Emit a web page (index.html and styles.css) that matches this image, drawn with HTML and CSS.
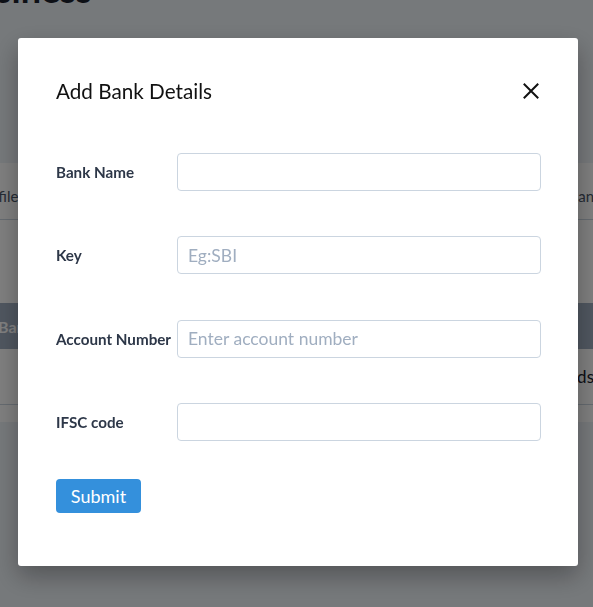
FILE: index.html
```html
<!DOCTYPE html>
<html lang="en">
<head>
<meta charset="utf-8">
<title>Add Bank Details</title>
<link rel="stylesheet" href="styles.css">
</head>
<body>
<div class="page">
  <h1 class="page-title">Business</h1>
  <div class="card">
    <div class="tabs">
      <span class="tab">Profile</span>
      <span class="tab tab-right">Bank Accounts</span>
    </div>
    <div class="table-head">
      <span>Bank Name</span>
    </div>
    <div class="table-row">
      <span class="row-right">Cards</span>
    </div>
    <div class="table-foot"></div>
  </div>
</div>

<div class="overlay">
  <div class="modal" role="dialog" aria-labelledby="modal-title">
    <div class="modal-header">
      <h2 class="modal-title" id="modal-title">Add Bank Details</h2>
      <button class="close" type="button" aria-label="Close">
        <svg width="16" height="16" viewBox="0 0 16 16" aria-hidden="true">
          <path d="M1.5 1.5 L14.5 14.5 M14.5 1.5 L1.5 14.5" stroke="#111" stroke-width="2" fill="none" stroke-linecap="square"/>
        </svg>
      </button>
    </div>
    <form class="form">
      <div class="field">
        <label class="label" for="bank">Bank Name</label>
        <input class="input" id="bank" type="text">
      </div>
      <div class="field">
        <label class="label" for="key">Key</label>
        <input class="input" id="key" type="text" placeholder="Eg:SBI">
      </div>
      <div class="field">
        <label class="label" for="acc">Account Number</label>
        <input class="input" id="acc" type="text" placeholder="Enter account number">
      </div>
      <div class="field">
        <label class="label" for="ifsc">IFSC code</label>
        <input class="input" id="ifsc" type="text">
      </div>
      <div class="actions">
        <button class="submit" type="button">Submit</button>
      </div>
    </form>
  </div>
</div>
</body>
</html>
```

FILE: styles.css
```css
* { box-sizing: border-box; }

html, body {
  margin: 0;
  padding: 0;
  height: 100%;
  overflow: hidden;
}

body {
  background: #edf2f7;
  font-family: Lato, "Noto Sans", "Liberation Sans", sans-serif;
  color: #1a202c;
}

.page-title {
  margin: -29px 0 0 -48px;
  font-size: 36px;
  line-height: 36px;
  font-weight: 700;
  color: #1a202c;
  white-space: nowrap;
}

.card {
  margin-top: 156px;
  background: #fff;
  height: 259px;
}

.tabs {
  display: flex;
  justify-content: space-between;
  height: 57px;
  align-items: center;
  border-bottom: 1px solid #cbd5e0;
  padding-top: 10px;
  margin-left: -24px;
  margin-right: -73px;
  font-size: 15px;
  color: #4a5568;
}

.table-head {
  margin-top: 83px;
  height: 46px;
  background: #a0aec0;
  color: #fff;
  font-weight: 700;
  font-size: 16px;
  display: flex;
  align-items: center;
  margin-left: -2px;
}

.table-row {
  height: 56px;
  display: flex;
  align-items: center;
  justify-content: flex-end;
  font-size: 17px;
  margin-right: -1px;
  border-bottom: 1px solid #cbd5e0;
}

.overlay {
  position: fixed;
  inset: 0;
  background: rgba(0, 0, 0, 0.5);
}

.modal {
  margin: 38px 0 0 18px;
  width: 560px;
  height: 528px;
  background: #fff;
  border-radius: 3px;
  box-shadow: 0 10px 25px rgba(0, 0, 0, 0.3);
  padding: 38px 38px 0 38px;
}

.modal-header {
  display: flex;
  align-items: center;
  justify-content: space-between;
  height: 30px;
  margin-bottom: 47px;
}

.modal-title {
  margin: 0;
  font-size: 20.7px;
  font-weight: 400;
  color: #111;
}

.close {
  border: 0;
  background: none;
  padding: 0;
  margin-right: 1px;
  width: 16px;
  height: 16px;
  display: flex;
}

.form {
  display: flex;
  flex-direction: column;
  gap: 45.33px;
}

.field {
  display: grid;
  grid-template-columns: 121px 1fr;
  align-items: center;
  height: 38px;
}

.label {
  font-size: 15.2px;
  font-weight: 700;
  color: #2d3748;
  white-space: nowrap;
}

.input {
  height: 38px;
  width: 364px;
  border: 1px solid #cbd5e0;
  border-radius: 4px;
  padding: 0 10px;
  font-family: inherit;
  font-size: 17.5px;
  color: #2d3748;
  background: #fff;
}

.input::placeholder {
  color: #a0aec0;
}

.actions {
  margin-top: -7px;
}

.submit {
  width: 85px;
  height: 34px;
  border: 0;
  border-radius: 4px;
  background: #3490dc;
  color: #fff;
  font-family: inherit;
  font-size: 18px;
  padding: 0;
}
```
